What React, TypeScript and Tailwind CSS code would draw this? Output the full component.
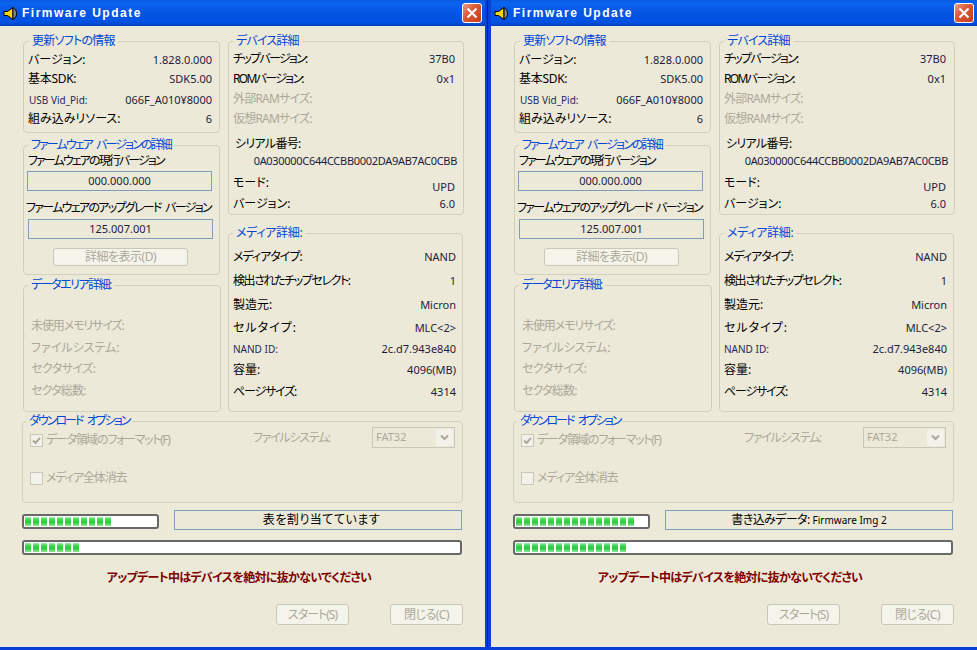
import React from "react";

function Group({ title, className, legendClass = "ml-[5px]", children }: { title: string; className: string; legendClass?: string; children?: React.ReactNode }) {
  return (
    <div className={"border border-[#d0d0bf] rounded-[4px] " + className}>
      <div className={"-mt-[8px] h-[14px] w-fit px-[3px] bg-[#ece9d8] text-[#0046d5] text-[12px] leading-[14px] whitespace-nowrap " + legendClass}>{title}</div>
      {children}
    </div>
  );
}

function Row({ label, value, className = "", muted = false, valueClass = "", labelClass = "" }: { label: string; value?: string; className?: string; muted?: boolean; valueClass?: string; labelClass?: string }) {
  return (
    <div className={"flex justify-between items-center h-[14px] leading-[14px] whitespace-nowrap " + className}>
      <span className={(muted ? "text-[#aca899] text-[12px] " : "text-black text-[12px] ") + labelClass}>{label}</span>
      {value ? <span className={"text-[11px] text-[#1c1c3c] " + valueClass}>{value}</span> : null}
    </div>
  );
}

function Progress({ segs, className }: { segs: number; className: string }) {
  return (
    <div className={"h-[15px] rounded-[3px] border-2 border-[#686868] bg-white flex items-center gap-[2px] pl-[1px] " + className}>
      {Array.from({ length: segs }).map((_, i) => (
        <div key={i} className="w-[6px] h-[9px] bg-[linear-gradient(180deg,#a6ebae_0%,#3fd64b_30%,#2ccb3a_60%,#8fe697_100%)]" />
      ))}
    </div>
  );
}

function Speaker() {
  return (
    <svg width="14" height="15" viewBox="0 0 14 15" className="shrink-0">
      <path d="M1 5.5H4.5L10 1.5V13.5L4.5 9.5H1Z" fill="#f6d611" stroke="#000" strokeWidth="1" />
      <path d="M10 1.5C12.5 3 13.5 5 13.5 7.5C13.5 10 12.5 12 10 13.5Z" fill="#8d8d80" stroke="#000" strokeWidth="1" />
    </svg>
  );
}

function CloseBtn() {
  return (
    <div className="w-[20px] h-[20px] rounded-[3px] border border-white bg-[linear-gradient(135deg,#e8a08a_0%,#dd5a38_40%,#c5391a_100%)] flex items-center justify-center">
      <svg width="12" height="12" viewBox="0 0 12 12">
        <path d="M1.5 1.5L10.5 10.5M10.5 1.5L1.5 10.5" stroke="#fff" strokeWidth="2.2" />
      </svg>
    </div>
  );
}

function Btn({ label, className }: { label: string; className: string }) {
  return (
    <div className={"h-[21px] flex items-center justify-center bg-[#f5f4ea] border border-[#c9c7ba] rounded-[3px] text-[#aca899] text-[12px] leading-[14px] " + className}>{label}</div>
  );
}

function Check({ checked, label, labelClass }: { checked?: boolean; label: string; labelClass: string }) {
  return (
    <div className="flex items-center gap-[3px]">
      <div className="w-[13px] h-[13px] border border-[#c9c7ba] bg-[#f3f2ea] flex items-center justify-center">
        {checked ? (
          <svg width="9" height="9" viewBox="0 0 9 9">
            <path d="M1 4.5L3.5 7L8 1.8" fill="none" stroke="#aca899" strokeWidth="2" />
          </svg>
        ) : null}
      </div>
      <span className={"text-[#aca899] text-[12px] leading-[14px] whitespace-nowrap " + labelClass}>{label}</span>
    </div>
  );
}

function FirmwareWindow({ status, statusLatin, statusClass, top, bottom, className }: { status: string; statusLatin?: string; statusClass: string; top: number; bottom: number; className: string }) {
  return (
    <div className={"flex flex-col h-full border-[#0640d8] " + className}>
      <div className="h-[26px] shrink-0 flex items-center justify-between pl-[3px] pr-[3px] bg-[linear-gradient(180deg,#0a5ae0_0%,#0a64f0_12%,#0455e2_50%,#0252e4_85%,#0040b8_100%)]">
        <div className="flex items-center gap-[5px]">
          <Speaker />
          <span className="text-white font-bold text-[12px] tracking-[1.5px] font-['Liberation_Sans',sans-serif]">Firmware Update</span>
        </div>
        <CloseBtn />
      </div>
      <div className="flex-1 bg-[#ece9d8] pt-[15px] pl-[22px]">
        <div className="flex pl-px">
          <div className="w-[198px]">
            <Group title="更新ソフトの情報" className="w-[197px] h-[92px] pl-[4px] pr-[7px]" legendClass="ml-[1px] tracking-[-0.75px]">
              <Row label="バージョン:" value="1.828.0.000" className="mt-[5px]" />
              <Row label="基本SDK:" value="SDK5.00" className="mt-[5px]" labelClass="tracking-[-0.3px]" />
              <Row label="USB Vid_Pid:" value="066F_A010¥8000" className="mt-[7px] pl-px" labelClass="!text-[10px] !text-[#26265c]" />
              <Row label="組み込みリソース:" value="6" className="mt-[5px]" />
            </Group>
            <Group title="ファームウェア バージョンの詳細" className="mt-[12px] w-[197px] h-[130px] pl-[2px]" legendClass="ml-[2px] tracking-[-1.9px] [word-spacing:3px]">
              <div className="mt-[2px] ml-[2px] h-[14px] text-[12px] leading-[14px] whitespace-nowrap tracking-[-1.9px]">ファームウェアの現行バージョン</div>
              <div className="mt-[3px] ml-px w-[185px] h-[20px] border border-[#7f9db9] flex items-center justify-center text-[11px] text-[#1c1c3c]">000.000.000</div>
              <div className="mt-[10px] h-[14px] text-[12px] leading-[14px] whitespace-nowrap tracking-[-1.7px] [word-spacing:3px]">ファームウェアのアップグレード バージョン</div>
              <div className="mt-[4px] ml-[2px] w-[185px] h-[20px] border border-[#7f9db9] flex items-center justify-center text-[11px] text-[#1c1c3c]">125.007.001</div>
              <Btn label="詳細を表示(D)" className="mt-[9px] ml-[27px] w-[135px] !h-[18px] tracking-[-0.5px]" />
            </Group>
            <Group title="データエリア詳細:" className="mt-[10px] w-[198px] h-[127px] pl-[7px]" legendClass="-ml-[3px] tracking-[-1.5px]">
              <Row label="未使用メモリサイズ:" muted className="mt-[27px]" labelClass="tracking-[-1.1px]" />
              <Row label="ファイルシステム:" muted className="mt-[8px]" />
              <Row label="セクタサイズ:" muted className="mt-[7px]" labelClass="tracking-[-0.5px]" />
              <Row label="セクタ総数:" muted className="mt-[8px]" labelClass="tracking-[-0.8px]" />
            </Group>
          </div>
          <div className="ml-[7px]">
            <Group title="デバイス詳細" className="w-[236px] h-[174px] pl-[4px] pr-[8px]" legendClass="ml-0 tracking-[-0.8px]">
              <Row label="チップバージョン:" value="37B0" className="mt-[4px]" labelClass="tracking-[-1.7px]" />
              <Row label="ROMバージョン:" value="0x1" className="mt-[6px]" labelClass="tracking-[-1.7px]" />
              <Row label="外部RAMサイズ:" muted className="mt-[6px]" labelClass="tracking-[-0.8px]" />
              <Row label="仮想RAMサイズ:" muted className="mt-[6px]" labelClass="tracking-[-0.8px]" />
              <Row label="シリアル番号:" className="mt-[11px] pl-[2px]" labelClass="tracking-[-0.7px]" />
              <div className="mt-[3px] h-[14px] leading-[14px] -mr-[2px] text-right text-[11px] text-[#1c1c3c] whitespace-nowrap tracking-[-0.3px]">0A030000C644CCBB0002DA9AB7AC0CBB</div>
              <Row label="モード:" value="UPD" className="mt-[8px]" valueClass="pt-[7px]" />
              <Row label="バージョン:" value="6.0" className="mt-[7px]" />
            </Group>
            <Group title="メディア詳細:" className="mt-[18px] w-[235px] h-[179px] pl-[4px] pr-[6px]" legendClass="ml-0 tracking-[-0.3px]">
              <Row label="メディアタイプ:" value="NAND" className="mt-[10px]" labelClass="tracking-[-1px]" />
              <Row label="検出されたチップセレクト:" value="1" className="mt-[10px]" labelClass="tracking-[-1.4px]" />
              <Row label="製造元:" value="Micron" className="mt-[10px]" />
              <Row label="セルタイプ:" value="MLC<2>" className="mt-[9px]" labelClass="tracking-[1px]" />
              <Row label="NAND ID:" value="2c.d7.943e840" className="mt-[7px]" labelClass="!text-[10px] !text-[#26265c]" />
              <Row label="容量:" value="4096(MB)" className="mt-[7px]" />
              <Row label="ページサイズ:" value="4314" className="mt-[8px]" labelClass="tracking-[-1.2px]" />
            </Group>
          </div>
        </div>
        <Group title="ダウンロード オプション" className="mt-[9px] w-[441px] h-[82px] pl-[7px]" legendClass="-ml-[4px] tracking-[-2px] [word-spacing:3px]">
          <div className="-mt-px flex items-center h-[21px]">
            <div className="w-[223px] pt-[5px]"><Check checked label="データ領域のフォーマット(F)" labelClass="tracking-[-1.3px]" /></div>
            <div className="w-[119px] text-[#aca899] text-[12px] leading-[14px] tracking-[-1.3px]">ファイルシステム:</div>
            <div className="w-[83px] h-[21px] border border-[#c9c7ba] bg-[#ece9d8] flex items-center justify-between pl-[3px] pr-px text-[#aca899] text-[11px]">
              <span>FAT32</span>
              <div className="w-[17px] h-[17px] bg-[#f3f2ea] rounded-[2px] flex items-center justify-center">
                <svg width="9" height="7" viewBox="0 0 9 7">
                  <path d="M1 1.5L4.5 5L8 1.5" fill="none" stroke="#aca899" strokeWidth="2" />
                </svg>
              </div>
            </div>
          </div>
          <div className="mt-[23px]"><Check label="メディア全体消去" labelClass="tracking-[-1.1px]" /></div>
        </Group>
        <div className="mt-[7px] flex items-start h-[20px]">
          <Progress segs={top} className="mt-[4px] w-[137px]" />
          <div className="ml-[15px] w-[288px] h-[20px] border border-[#7f9db9] flex items-center justify-center gap-[3px] text-[12px] leading-[14px] whitespace-nowrap">
            <span className={statusClass}>{status}</span>
            {statusLatin ? <span className="text-[10px]">{statusLatin}</span> : null}
          </div>
        </div>
        <Progress segs={bottom} className="mt-[10px] w-[440px]" />
        <div className="mt-[16px] w-[434px] h-[14px] text-center text-[12px] leading-[14px] font-bold text-[#800000] whitespace-nowrap tracking-[-0.7px]">アップデート中はデバイスを絶対に抜かないでください</div>
        <div className="mt-[19px] w-[441px] flex justify-end gap-[41px]">
          <Btn label="スタート(S)" className="w-[73px] tracking-[-1px]" />
          <Btn label="閉じる(C)" className="w-[73px] tracking-[-0.5px]" />
        </div>
      </div>
    </div>
  );
}

export default function App() {
  return (
    <div className="w-[977px] h-[650px] flex overflow-hidden border-b-[3px] border-[#0640d8] text-black font-['Noto_Sans','Noto_Sans_CJK_JP',sans-serif] [font-feature-settings:'palt']">
      <FirmwareWindow status="表を割り当てています" statusClass="tracking-[0.5px] ml-[7px]" top={11} bottom={7} className="w-[487px] border-r-2" />
      <div className="w-px h-full bg-[#00248a]" />
      <FirmwareWindow status="書き込みデータ:" statusClass="tracking-[-0.6px]" statusLatin="Firmware Img 2" top={15} bottom={14} className="w-[489px] border-l-[3px]" />
    </div>
  );
}
